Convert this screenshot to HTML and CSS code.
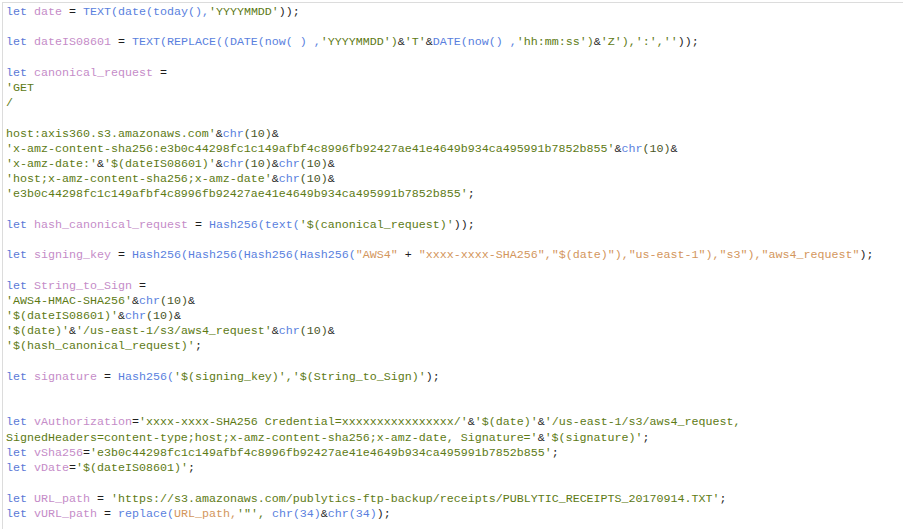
FILE: index.html
```html
<!DOCTYPE html>
<html>
<head>
<meta charset="utf-8">
<link rel="stylesheet" href="styles.css">
</head>
<body>
<div class="editor">
<pre class="code"><span class="k">let</span> <span class="v">date</span> = <span class="f">TEXT(date(today(),</span><span class="s">'YYYYMMDD'</span>));

<span class="k">let</span> <span class="v">dateIS08601</span> = <span class="f">TEXT(REPLACE((DATE(now( ) ,</span><span class="s">'YYYYMMDD')</span>&amp;<span class="s">'T'</span>&amp;<span class="f">DATE(now() ,</span><span class="s">'hh:mm:ss')</span>&amp;<span class="s">'Z'),':',''</span>));

<span class="k">let</span> <span class="v">canonical_request</span> =
<span class="s">'GET</span>
<span class="s">/</span>

<span class="s">host:axis360.s3.amazonaws.com'</span>&amp;<span class="f">chr</span><span class="n">(10)</span>&amp;
<span class="s">'x-amz-content-sha256:e3b0c44298fc1c149afbf4c8996fb92427ae41e4649b934ca495991b7852b855'</span>&amp;<span class="f">chr</span><span class="n">(10)</span>&amp;
<span class="s">'x-amz-date:'</span>&amp;<span class="s">'$(dateIS08601)'</span>&amp;<span class="f">chr</span><span class="n">(10)</span>&amp;<span class="f">chr</span><span class="n">(10)</span>&amp;
<span class="s">'host;x-amz-content-sha256;x-amz-date'</span>&amp;<span class="f">chr</span><span class="n">(10)</span>&amp;
<span class="s">'e3b0c44298fc1c149afbf4c8996fb92427ae41e4649b934ca495991b7852b855'</span>;

<span class="k">let</span> <span class="v">hash_canonical_request</span> = <span class="f">Hash256(text(</span><span class="s">'$(canonical_request)'</span>));

<span class="k">let</span> <span class="v">signing_key</span> = <span class="f">Hash256(Hash256(Hash256(Hash256(</span><span class="d">"AWS4"</span> + <span class="d">"xxxx-xxxx-SHA256","$(date)"),"us-east-1"),"s3"),"aws4_request"</span>);

<span class="k">let</span> <span class="v">String_to_Sign</span> =
<span class="s">'AWS4-HMAC-SHA256'</span>&amp;<span class="f">chr</span><span class="n">(10)</span>&amp;
<span class="s">'$(dateIS08601)'</span>&amp;<span class="f">chr</span><span class="n">(10)</span>&amp;
<span class="s">'$(date)'</span>&amp;<span class="s">'/us-east-1/s3/aws4_request'</span>&amp;<span class="f">chr</span><span class="n">(10)</span>&amp;
<span class="s">'$(hash_canonical_request)'</span>;

<span class="k">let</span> <span class="v">signature</span> = <span class="f">Hash256(</span><span class="s">'$(signing_key)','$(String_to_Sign)'</span>);


<span class="k">let</span> <span class="v">vAuthorization</span>=<span class="s">'xxxx-xxxx-SHA256 Credential=xxxxxxxxxxxxxxxx/'</span>&amp;<span class="s">'$(date)'</span>&amp;<span class="s">'/us-east-1/s3/aws4_request,</span>
<span class="s">SignedHeaders=content-type;host;x-amz-content-sha256;x-amz-date, Signature='</span>&amp;<span class="s">'$(signature)'</span>;
<span class="k">let</span> <span class="v">vSha256</span>=<span class="s">'e3b0c44298fc1c149afbf4c8996fb92427ae41e4649b934ca495991b7852b855'</span>;
<span class="k">let</span> <span class="v">vDate</span>=<span class="s">'$(dateIS08601)'</span>;

<span class="k">let</span> <span class="v">URL_path</span> = <span class="s">'https://s3.amazonaws.com/publytics-ftp-backup/receipts/PUBLYTIC_RECEIPTS_20170914.TXT'</span>;
<span class="k">let</span> <span class="v">vURL_path</span> = <span class="f">replace(</span><span class="d">URL_path,</span><span class="s">'"',</span> <span class="f">chr(34)</span>&amp;<span class="f">chr(34)</span>);</pre>
</div>
</body>
</html>
```

FILE: styles.css
```css
html, body {
  margin: 0;
  padding: 0;
  background: #ffffff;
}

.editor {
  margin: 2px 2px 0 2px;
  border-top: 1px solid #dcdcdc;
  border-left: 1px solid #dcdcdc;
  height: 527px;
  box-sizing: border-box;
  padding: 2px 0 0 3px;
  overflow: hidden;
}

.code {
  margin: 0;
  font-family: "Liberation Mono", "Courier New", monospace;
  font-size: 11.67px;
  line-height: 15.2px;
  color: #1e1e1e;
  white-space: pre;
}

.k { color: #5a78d6; }
.v { color: #c58cc8; }
.f { color: #5a7fde; }
.s { color: #5d7a14; }
.n { color: #4a5626; }
.d { color: #d3965c; }
```
